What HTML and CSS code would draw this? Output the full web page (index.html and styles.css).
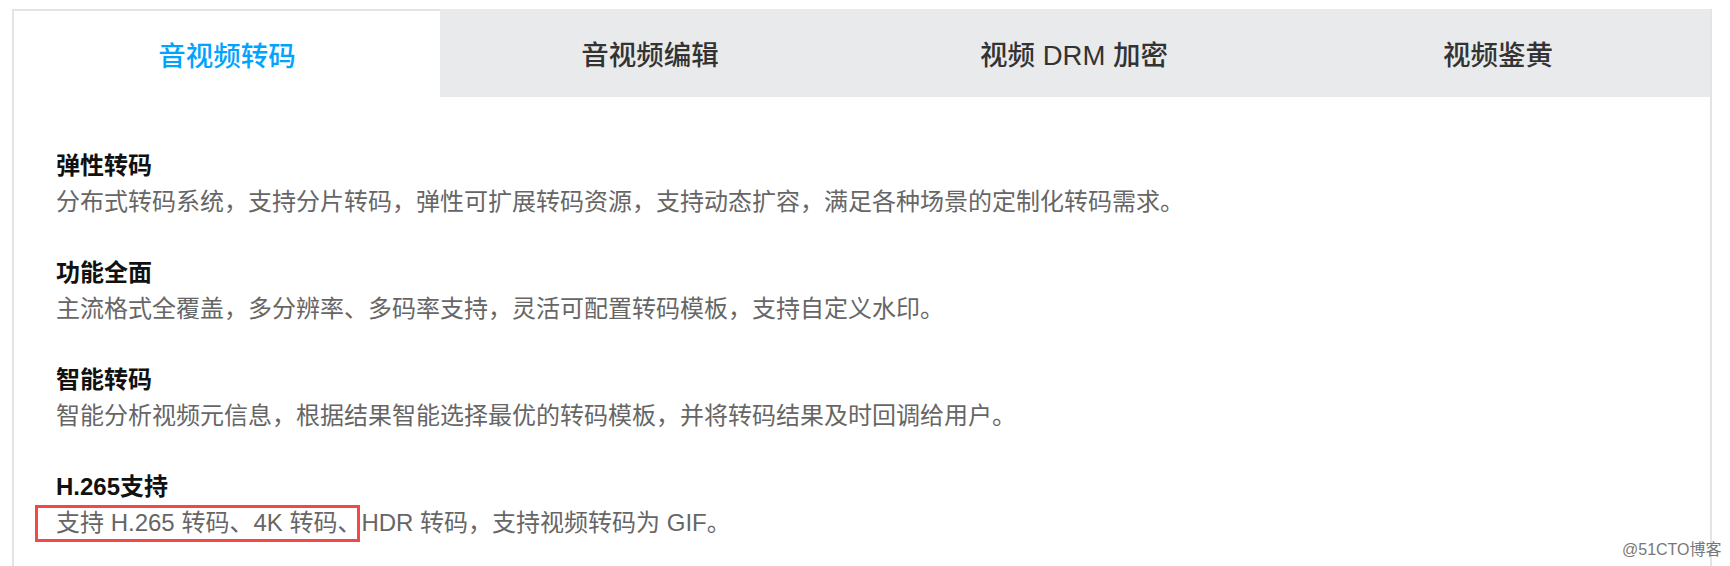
FILE: index.html
```html
<!DOCTYPE html>
<html lang="zh-CN">
<head>
<meta charset="utf-8">
<title>音视频转码</title>
<link rel="stylesheet" href="styles.css">
</head>
<body>
<div class="panel">
  <div class="tabs">
    <div class="tab active">音视频转码</div>
    <div class="tab">音视频编辑</div>
    <div class="tab">视频 DRM 加密</div>
    <div class="tab">视频鉴黄</div>
  </div>
  <div class="content">
    <div class="item">
      <div class="title">弹性转码</div>
      <div class="desc">分布式转码系统，支持分片转码，弹性可扩展转码资源，支持动态扩容，满足各种场景的定制化转码需求。</div>
    </div>
    <div class="item">
      <div class="title">功能全面</div>
      <div class="desc">主流格式全覆盖，多分辨率、多码率支持，灵活可配置转码模板，支持自定义水印。</div>
    </div>
    <div class="item">
      <div class="title">智能转码</div>
      <div class="desc">智能分析视频元信息，根据结果智能选择最优的转码模板，并将转码结果及时回调给用户。</div>
    </div>
    <div class="item last">
      <div class="title">H.265支持</div>
      <div class="desc"><span class="mark">支持 H.265 转码、4K 转码、</span>HDR 转码，支持视频转码为 GIF。</div>
    </div>
  </div>
</div>
<div class="watermark">@51CTO博客</div>
</body>
</html>
```

FILE: styles.css
```css
html, body {
  margin: 0;
  padding: 0;
  background: #ffffff;
  width: 1730px;
  height: 566px;
  overflow: hidden;
  font-family: "Liberation Sans", "Noto Sans CJK SC", sans-serif;
}

.panel {
  margin: 9px 0 0 12px;
  width: 1700px;
  height: 557px;
  box-sizing: border-box;
  border-left: 2px solid #e4e4e4;
  border-right: 2px solid #e4e4e4;
  overflow: hidden;
}

.tabs {
  display: grid;
  grid-template-columns: repeat(4, 1fr);
  height: 88px;
  background: #e9eaec;
}

.tab {
  display: flex;
  align-items: center;
  justify-content: center;
  font-size: 27.5px;
  font-weight: 500;
  color: #333333;
}

.tab.active {
  background: #ffffff;
  color: #00a4ff;
  border-top: 2px solid #e4e4e4;
  margin-right: -2px;
}

.content {
  padding: 51px 0 0 42px;
}

.item {
  margin-bottom: 35px;
}

.item.last {
  margin-bottom: 0;
}

.title {
  font-size: 24px;
  line-height: 36px;
  height: 36px;
  font-weight: bold;
  color: #111111;
}

.desc {
  font-size: 24px;
  line-height: 36px;
  height: 36px;
  color: #666666;
}

.mark {
  position: relative;
}

.mark::after {
  content: "";
  position: absolute;
  left: -21px;
  right: 1px;
  top: -4px;
  bottom: -6px;
  border: 3px solid #f24848;
}

.watermark {
  position: absolute;
  left: 1622px;
  top: 536px;
  font-size: 16px;
  color: #777777;
  font-family: "Liberation Sans", "Noto Sans CJK SC", sans-serif;
}
```
